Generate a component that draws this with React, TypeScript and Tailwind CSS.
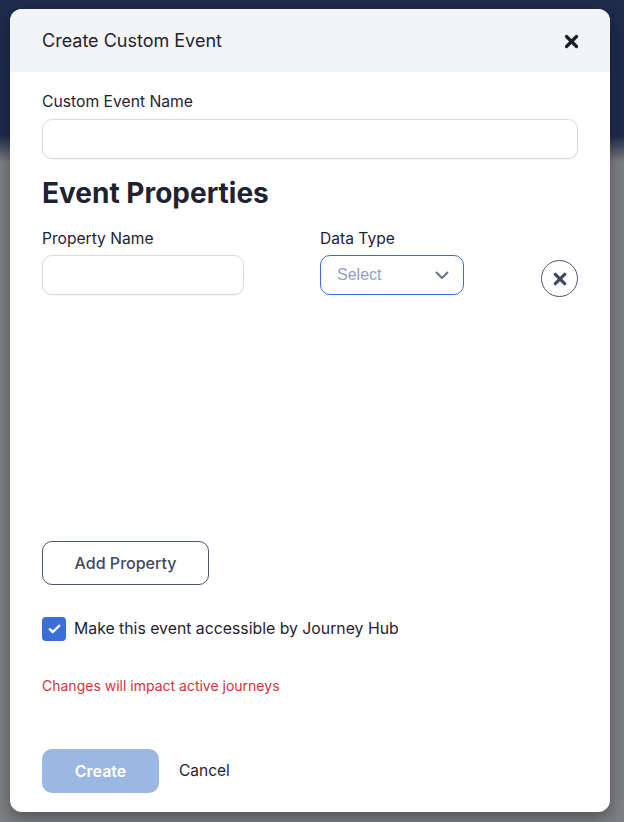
import React from "react";

const font = { fontFamily: "Inter, 'Noto Sans', sans-serif" };

export default function App() {
  return (
    <div
      className="w-full h-[822px] pt-[9px] pl-[10px] bg-[linear-gradient(to_bottom,#1e2b4b_0px,#1e2b4b_136px,#7e7f82_162px,#7e7f82_100%)]"
      style={font}
    >
      <div className="w-[600px] h-[803px] rounded-[12px] bg-white flex flex-col overflow-hidden shadow-[0_6px_16px_rgba(0,0,0,0.35)]">
        <div className="h-[63px] shrink-0 bg-[#f3f4f6] pl-8 pr-[31px] flex items-center justify-between">
          <span className="text-[18px] text-[#1f2330]">Create Custom Event</span>
          <svg width="15" height="15" viewBox="0 0 15 15" className="mt-[1px]">
            <path d="M2.5 2.5 L12.5 12.5 M12.5 2.5 L2.5 12.5" stroke="#1a1d26" strokeWidth="3.2" strokeLinecap="round" />
          </svg>
        </div>
        <div className="flex flex-col px-8 pt-[20px]">
          <label className="text-[15.7px] leading-[20px] text-[#1f2330]">Custom Event Name</label>
          <div className="mt-[7px] h-[40px] w-[536px] rounded-[10px] border border-[#d8dae2] shadow-[0_1px_2px_rgba(0,0,0,0.06)]" />
          <h2 className="mt-[18px] text-[28px] leading-[32px] font-bold text-[#1f2330]">Event Properties</h2>
          <div className="mt-[20px] flex items-start">
            <div className="flex flex-col w-[278px]">
              <label className="text-[15.6px] leading-[20px] text-[#1f2330]">Property Name</label>
              <div className="mt-[6px] h-[40px] w-[202px] rounded-[10px] border border-[#d8dae2] shadow-[0_1px_2px_rgba(0,0,0,0.06)]" />
            </div>
            <div className="flex flex-col w-[221px]">
              <label className="text-[15.6px] leading-[20px] text-[#1f2330]">Data Type</label>
              <div className="mt-[6px] h-[40px] w-[144px] rounded-[10px] border border-[#3b6fd8] flex items-center justify-between pl-[16px] pr-[14px]">
                <span className="text-[16px] text-[#94a0b8]" style={{ fontFamily: "'Liberation Sans', Arial, sans-serif" }}>Select</span>
                <svg width="14" height="9" viewBox="0 0 14 9">
                  <path d="M1.5 1.5 L7 7 L12.5 1.5" stroke="#64748b" strokeWidth="2" fill="none" strokeLinecap="round" strokeLinejoin="round" />
                </svg>
              </div>
            </div>
            <div className="mt-[31px] w-[37px] h-[37px] rounded-full border border-[#4a5568] flex items-center justify-center">
              <svg width="14" height="14" viewBox="0 0 14 14">
                <path d="M2.3 2.3 L11.7 11.7 M11.7 2.3 L2.3 11.7" stroke="#3f4a5e" strokeWidth="3.2" strokeLinecap="round" />
              </svg>
            </div>
          </div>
          <div className="mt-[244px] h-[44px] w-[167px] rounded-[10px] border border-[#4a5568] flex items-center justify-center text-[16px] font-medium text-[#3f4a5e]">
            Add Property
          </div>
          <div className="mt-[32px] flex items-center">
            <div className="w-[24px] h-[24px] rounded-[4px] bg-[#3b6fd8] flex items-center justify-center">
              <svg width="13" height="10" viewBox="0 0 13 10">
                <path d="M1.8 5.2 L4.8 8 L11.2 1.8" stroke="white" strokeWidth="2.4" fill="none" strokeLinecap="round" strokeLinejoin="round" />
              </svg>
            </div>
            <span className="ml-[8px] text-[15.8px] text-[#1f2330]">Make this event accessible by Journey Hub</span>
          </div>
          <div className="mt-[36px] text-[14px] leading-[18px] text-[#d2333f]">Changes will impact active journeys</div>
          <div className="mt-[54px] flex items-center">
            <div className="h-[44px] w-[117px] rounded-[10px] bg-[#9bb8e4] flex items-center justify-center text-[16px] font-semibold text-white">
              Create
            </div>
            <span className="ml-[20px] text-[15.5px] text-[#1f2330]">Cancel</span>
          </div>
        </div>
      </div>
    </div>
  );
}
